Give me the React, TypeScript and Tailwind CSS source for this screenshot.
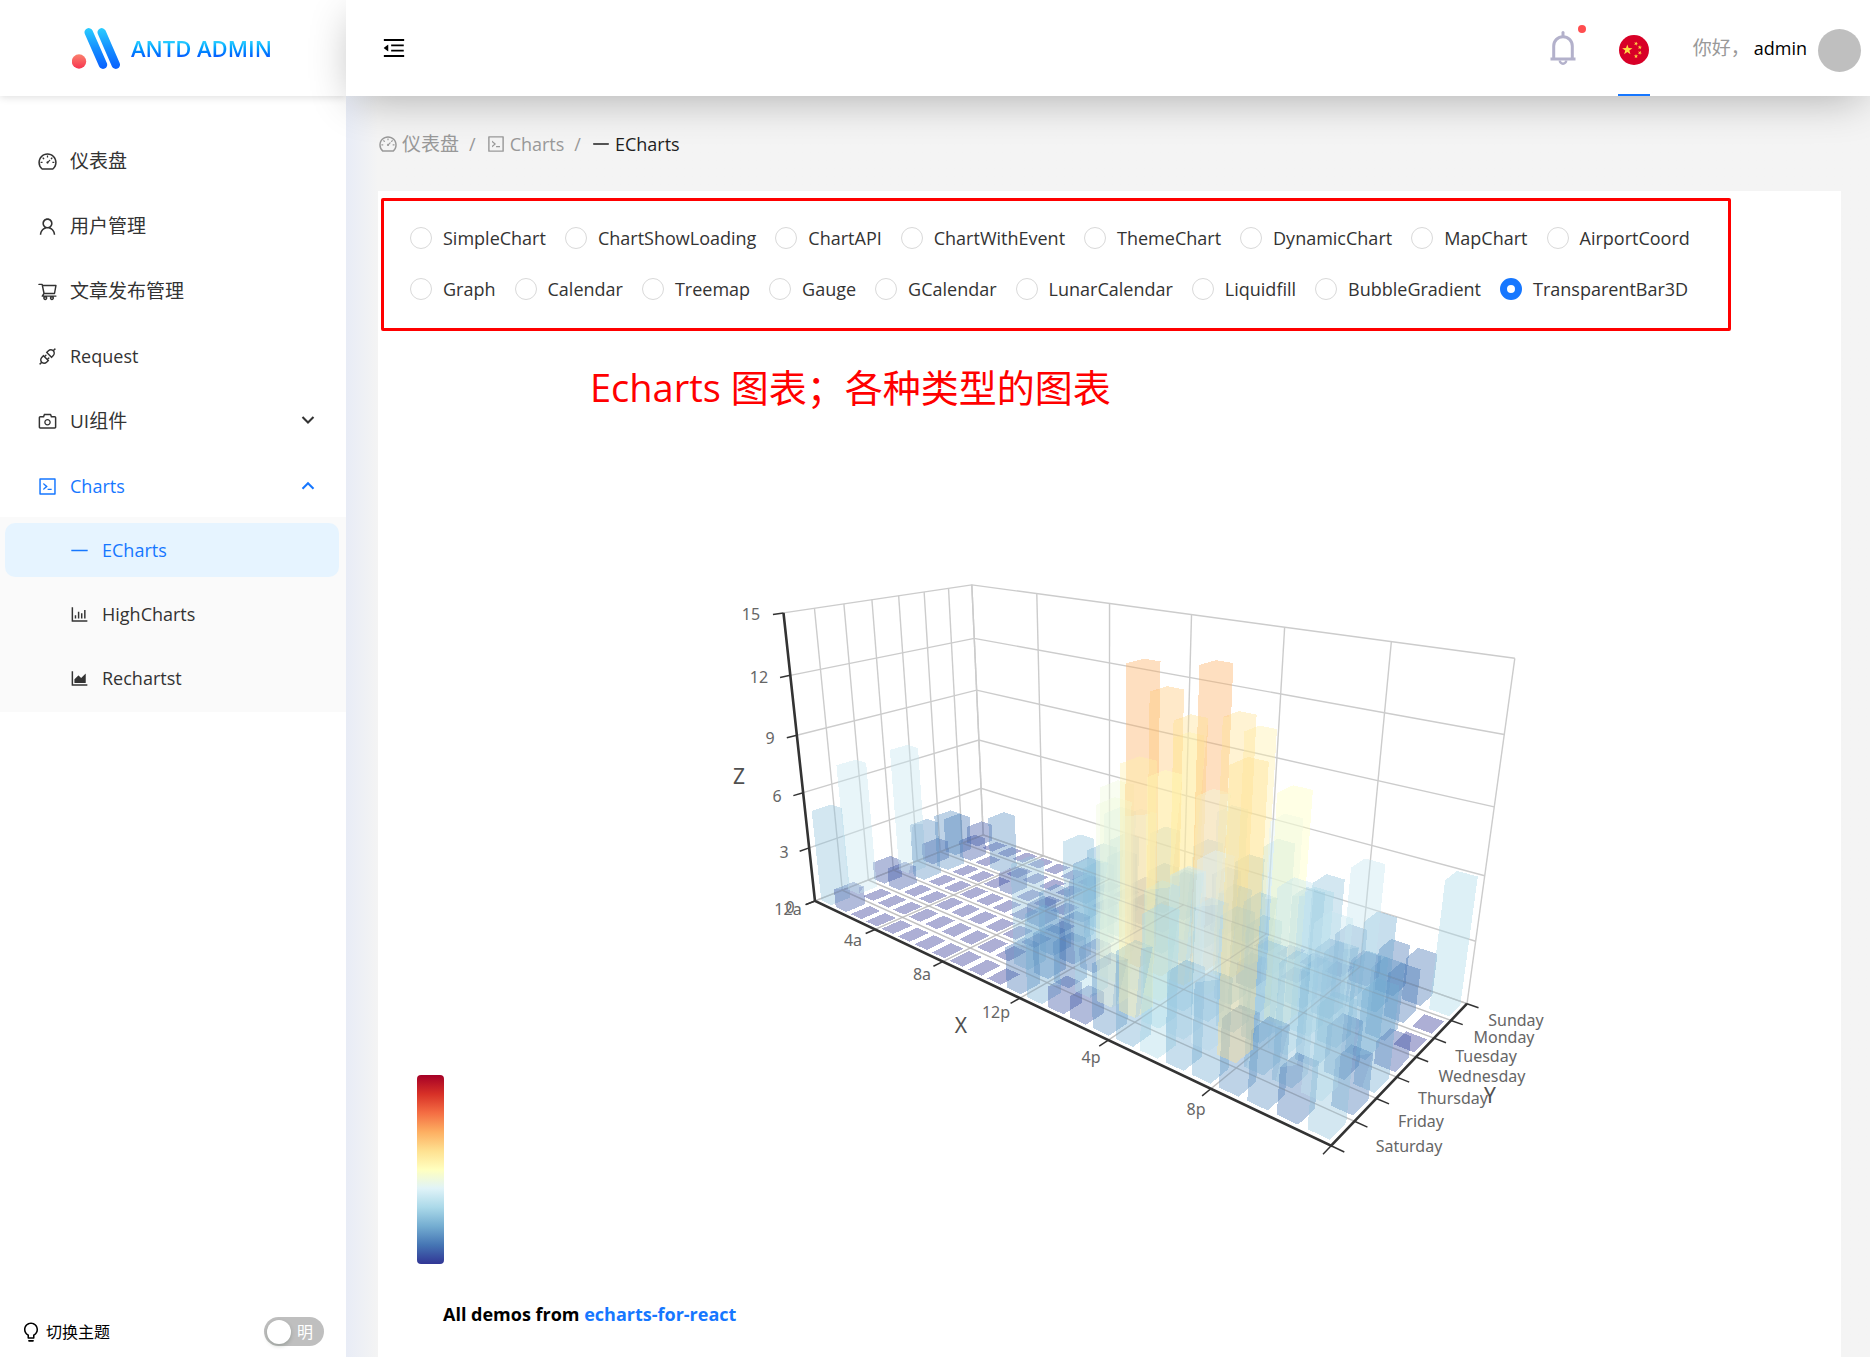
import React, { useState } from "react";
import {
  AiOutlineApi,
  AiOutlineAreaChart,
  AiOutlineBarChart,
  AiOutlineBulb,
  AiOutlineCamera,
  AiOutlineCode,
  AiOutlineDashboard,
  AiOutlineLine,
  AiOutlineMenuFold,
  AiOutlineShoppingCart,
  AiOutlineUser,
} from "react-icons/ai";

/* ---------- 3D bar chart ---------- */

const HOURS_BY_DAY = [
  [5, 1, 0, 0, 0, 0, 0, 0, 0, 0, 0, 2, 4, 1, 1, 3, 4, 6, 4, 4, 3, 3, 2, 5],
  [7, 0, 0, 0, 0, 0, 0, 0, 0, 0, 5, 2, 2, 6, 9, 11, 6, 7, 8, 12, 5, 5, 7, 2],
  [1, 1, 0, 0, 0, 0, 0, 0, 0, 0, 3, 2, 1, 9, 8, 10, 6, 5, 5, 5, 7, 4, 2, 4],
  [7, 3, 0, 0, 0, 0, 0, 0, 1, 0, 5, 4, 7, 14, 13, 12, 9, 5, 5, 10, 6, 4, 4, 1],
  [1, 3, 0, 0, 0, 1, 0, 0, 0, 2, 4, 4, 2, 4, 4, 14, 12, 1, 8, 5, 3, 7, 3, 0],
  [2, 1, 0, 3, 0, 0, 0, 0, 2, 0, 4, 1, 5, 10, 5, 7, 11, 6, 0, 5, 3, 4, 2, 0],
  [1, 0, 0, 0, 0, 0, 0, 0, 0, 0, 1, 0, 2, 1, 3, 4, 0, 0, 0, 0, 1, 2, 2, 6],
];

const RAMP = [
  [49, 54, 149],
  [69, 117, 180],
  [116, 173, 209],
  [171, 217, 233],
  [224, 243, 248],
  [255, 255, 191],
  [254, 224, 144],
  [253, 174, 97],
  [244, 109, 67],
  [215, 48, 39],
  [165, 0, 38],
];

function rampColor(value: number) {
  const t = value / 2;
  const i = Math.min(Math.floor(t), 9);
  const f = t - i;
  const c = RAMP[i].map((a, k) => Math.round(a + (RAMP[i + 1][k] - a) * f));
  return `rgb(${c[0]},${c[1]},${c[2]})`;
}

type V3 = [number, number, number];

const ALPHA = (20 * Math.PI) / 180;
const BETA = (40 * Math.PI) / 180;
const DISTANCE = 305;
const FOCAL = 1016.5;
const CENTER_X = 701;
const CENTER_Y = 470;

const EYE: V3 = [
  DISTANCE * Math.cos(ALPHA) * Math.sin(BETA),
  DISTANCE * Math.sin(ALPHA),
  DISTANCE * Math.cos(ALPHA) * Math.cos(BETA),
];

function eyeDistance(p: V3) {
  return Math.hypot(p[0] - EYE[0], p[1] - EYE[1], p[2] - EYE[2]);
}

function nearness([x, y, z]: V3) {
  return (
    x * Math.cos(ALPHA) * Math.sin(BETA) +
    y * Math.sin(ALPHA) +
    z * Math.cos(ALPHA) * Math.cos(BETA)
  );
}

function project(p: V3) {
  const [x, y, z] = p;
  const right = x * Math.cos(BETA) - z * Math.sin(BETA);
  const up =
    -x * Math.sin(ALPHA) * Math.sin(BETA) +
    y * Math.cos(ALPHA) -
    z * Math.sin(ALPHA) * Math.cos(BETA);
  const s = FOCAL / (DISTANCE - nearness(p));
  return [CENTER_X + right * s, CENTER_Y - up * s];
}

/* hour 0..24, day 0..7, value 0..15 to box coordinates */
function at(hour: number, day: number, value: number): V3 {
  return [-100 + (hour / 24) * 200, -50 + (value / 15) * 100, 40 - (day / 7) * 80];
}

function pts(list: V3[]) {
  return list.map((p) => project(p).map((n) => n.toFixed(2)).join(",")).join(" ");
}

/* Far triangles first; each is ranked by its corner nearest to the eye. */
function buildTriangles() {
  const out: { key: number; points: string; fill: string }[] = [];
  HOURS_BY_DAY.forEach((row, d) =>
    row.forEach((v, h) => {
      const [x0, x1, y0, y1] = [h + 0.15, h + 0.85, d + 0.15, d + 0.85];
      const quads: V3[][] = [[at(x0, y0, v), at(x1, y0, v), at(x1, y1, v), at(x0, y1, v)]];
      if (v > 0) {
        quads.push([at(x0, y0, 0), at(x1, y0, 0), at(x1, y0, v), at(x0, y0, v)]);
        quads.push([at(x1, y0, 0), at(x1, y1, 0), at(x1, y1, v), at(x1, y0, v)]);
      }
      quads.forEach((q) =>
        [
          [q[0], q[1], q[2]],
          [q[0], q[2], q[3]],
        ].forEach((t) =>
          out.push({
            key: Math.min(...t.map(eyeDistance)),
            points: pts(t),
            fill: rampColor(v),
          }),
        ),
      );
    }),
  );
  return out.sort((a, b) => b.key - a.key);
}

const TRIANGLES = buildTriangles();
const Z_TICKS = [0, 3, 6, 9, 12, 15];
const X_TICKS = [0, 4, 8, 12, 16, 20, 24];
const Y_TICKS = [0, 1, 2, 3, 4, 5, 6, 7];

const WALL_LINES: V3[][] = [
  ...Z_TICKS.map((v) => [at(0, 0, v), at(0, 7, v), at(24, 7, v)]),
  ...Y_TICKS.map((d) => [at(0, d, 0), at(0, d, 15)]),
  ...X_TICKS.map((h) => [at(h, 7, 0), at(h, 7, 15)]),
];
const FLOOR_LINES: V3[][] = [
  ...Y_TICKS.map((d) => [at(0, d, 0), at(24, d, 0)]),
  ...X_TICKS.map((h) => [at(h, 0, 0), at(h, 7, 0)]),
];
const TICK_LINES: V3[][] = [
  ...Z_TICKS.map((v) => [at(0, 0, v), at(0, -0.33, v)]),
  ...X_TICKS.map((h) => [at(h, 0, 0), at(h, -0.33, 0)]),
  ...Y_TICKS.map((d) => [at(24, d, 0), at(24.4, d, 0)]),
];

const AXIS_LABELS: [string, number, number][] = [
  ["15", 343, 285],
  ["12", 351, 348],
  ["9", 362, 409],
  ["6", 369, 467],
  ["3", 376, 523],
  ["0", 382, 578],
  ["12a", 380, 580],
  ["4a", 445, 611],
  ["8a", 514, 645],
  ["12p", 588, 683],
  ["4p", 683, 728],
  ["8p", 788, 780],
  ["Sunday", 1108, 691],
  ["Monday", 1096, 708],
  ["Tuesday", 1078, 727],
  ["Wednesday", 1074, 747],
  ["Thursday", 1045, 769],
  ["Friday", 1013, 792],
  ["Saturday", 1001, 817],
];
const AXIS_NAMES: [string, number, number][] = [
  ["Z", 331, 447],
  ["X", 553, 696],
  ["Y", 1082, 766],
];

function BarChart3D() {
  return (
    <svg
      viewBox="0 0 1403 940"
      className="h-[940px] w-full"
      role="img"
      aria-label="TransparentBar3D"
    >
      <g fill="none" stroke="#cccccc" strokeWidth="1.4">
        {WALL_LINES.concat(FLOOR_LINES).map((l, i) => (
          <polyline key={i} points={pts(l)} />
        ))}
      </g>
      <g fillOpacity="0.4" shapeRendering="crispEdges">
        {TRIANGLES.map((t, i) => (
          <polygon key={i} points={t.points} fill={t.fill} />
        ))}
      </g>
      <g fill="none" stroke="#9a9a9a" strokeOpacity="0.22" strokeWidth="1.2">
        {FLOOR_LINES.map((l, i) => (
          <polyline key={i} points={pts(l)} />
        ))}
      </g>
      <g fill="none" stroke="#333333">
        <polyline
          points={pts([at(0, 0, 15), at(0, 0, 0), at(24, 0, 0), at(24, 7, 0)])}
          strokeWidth="2.6"
        />
        {TICK_LINES.map((l, i) => (
          <polyline key={i} points={pts(l)} strokeWidth="1.5" />
        ))}
      </g>
      <g
        fill="#666666"
        textAnchor="middle"
        dominantBaseline="central"
        className="font-['Noto_Sans',sans-serif] text-[16px] font-normal"
      >
        {AXIS_LABELS.map(([t, x, y]) => (
          <text key={t} x={x} y={y}>
            {t}
          </text>
        ))}
      </g>
      <g
        fill="#505050"
        textAnchor="middle"
        dominantBaseline="central"
        className="font-['Noto_Sans',sans-serif] text-[21px] font-normal"
      >
        {AXIS_NAMES.map(([t, x, y]) => (
          <text key={t} x={x} y={y}>
            {t}
          </text>
        ))}
      </g>
    </svg>
  );
}

/* ---------- small drawings ---------- */

function Logo() {
  return (
    <svg width="48" height="41" viewBox="0 0 48 41" aria-hidden="true">
      <defs>
        <linearGradient id="logo-blue" gradientUnits="userSpaceOnUse" x1="0" y1="0" x2="0" y2="41">
          <stop offset="0" stopColor="#29cdff" />
          <stop offset="0.5" stopColor="#148eff" />
          <stop offset="1" stopColor="#0a60ff" />
        </linearGradient>
        <linearGradient id="logo-red" x1="0" y1="0" x2="0" y2="1">
          <stop offset="0" stopColor="#fa816e" />
          <stop offset="1" stopColor="#f7344f" />
        </linearGradient>
      </defs>
      <circle cx="7" cy="33.5" r="7.2" fill="url(#logo-red)" />
      <path
        d="M16.7 4.3 31 36.7M29.7 4.3 43.8 36.7"
        stroke="url(#logo-blue)"
        strokeWidth="8.4"
        strokeLinecap="round"
      />
    </svg>
  );
}

function Bell() {
  return (
    <svg width="26" height="34" viewBox="0 0 26 34" fill="none" stroke="#b3b1cb" aria-hidden="true">
      <path d="M13 1.5V5" strokeWidth="3" strokeLinecap="round" />
      <path d="M3.7 28V15a9.3 9.3 0 0 1 18.6 0v13" strokeWidth="3" />
      <path d="M.5 28h25" strokeWidth="3" />
      <path d="M9.8 29.5a3.2 3.2 0 0 0 6.4 0" strokeWidth="2.4" />
    </svg>
  );
}

function star(cx: number, cy: number, r: number, turn: number) {
  return Array.from({ length: 10 }, (_, i) => {
    const a = (i * Math.PI) / 5 - Math.PI / 2 + turn;
    const k = i % 2 ? r * 0.4 : r;
    return `${(cx + k * Math.cos(a)).toFixed(2)},${(cy + k * Math.sin(a)).toFixed(2)}`;
  }).join(" ");
}

function Flag() {
  return (
    <svg width="30" height="30" viewBox="0 0 30 30" aria-hidden="true">
      <circle cx="15" cy="15" r="15" fill="#d80027" />
      <g fill="#ffda44">
        <polygon points={star(8.3, 14.8, 5.4, 0)} />
        <polygon points={star(17, 8.7, 2.2, 0.4)} />
        <polygon points={star(20.8, 12.3, 2.2, 0.1)} />
        <polygon points={star(20.8, 17.8, 2.2, 0.5)} />
        <polygon points={star(17, 21.3, 2.2, 0)} />
      </g>
    </svg>
  );
}

function Chevron({ up }: { up?: boolean }) {
  return (
    <svg
      width="14"
      height="10"
      viewBox="0 0 14 10"
      fill="none"
      stroke="currentColor"
      strokeWidth="2.1"
      aria-hidden="true"
    >
      <path d={up ? "M1.5 7.8 7 2.3l5.5 5.5" : "M1.5 1 7 6.5 12.5 1"} />
    </svg>
  );
}

/* ---------- sidebar ---------- */

const MENU = [
  { label: "仪表盘", icon: AiOutlineDashboard },
  { label: "用户管理", icon: AiOutlineUser },
  { label: "文章发布管理", icon: AiOutlineShoppingCart },
  { label: "Request", icon: AiOutlineApi },
  { label: "UI组件", icon: AiOutlineCamera, arrow: "down" },
  { label: "Charts", icon: AiOutlineCode, arrow: "up" },
];

const SUBMENU = [
  { label: "ECharts", icon: AiOutlineLine, active: true },
  { label: "HighCharts", icon: AiOutlineBarChart },
  { label: "Rechartst", icon: AiOutlineAreaChart },
];

function Sidebar() {
  const [light, setLight] = useState(true);
  return (
    <aside className="flex w-[346px] shrink-0 flex-col bg-white">
      <div className="flex h-24 items-center gap-[11px] pl-[72px] shadow-[0_1px_8px_rgba(0,0,0,0.14)]">
        <Logo />
        <span className="bg-linear-to-t from-[#0a60ff] from-25% to-[#29cdff] to-70% bg-clip-text text-[22px] leading-8 font-semibold whitespace-nowrap text-transparent">
          ANTD ADMIN
        </span>
      </div>
      <nav className="flex flex-col pt-[38px]">
        <ul className="flex flex-col gap-[11px]">
          {MENU.map(({ label, icon: Icon, arrow }) => (
            <li key={label}>
              <button
                type="button"
                className={
                  arrow === "up"
                    ? "flex h-[54px] w-full items-center pr-[31px] pl-[37px] text-left text-[#1677ff]"
                    : "flex h-[54px] w-full items-center pr-[31px] pl-[37px] text-left"
                }
              >
                <Icon size={21} />
                <span
                  className={
                    /[^ -~]/.test(label) ? "ml-3 grow text-[19px]" : "ml-3 grow"
                  }
                >
                  {label}
                </span>
                {arrow && <Chevron up={arrow === "up"} />}
              </button>
            </li>
          ))}
        </ul>
        <ul className="mt-1 flex flex-col gap-2.5 bg-[#fafafa] pt-1.5 pr-[7px] pb-[7px] pl-[5px]">
          {SUBMENU.map(({ label, icon: Icon, active }) => (
            <li key={label}>
              <a
                href="#"
                className={
                  active
                    ? "flex h-[54px] items-center gap-3 rounded-[10px] bg-[#e6f4ff] pl-16 text-[#1677ff]"
                    : "flex h-[54px] items-center gap-3 rounded-[10px] pl-16"
                }
              >
                <Icon size={21} />
                {label}
              </a>
            </li>
          ))}
        </ul>
      </nav>
      <div className="mt-auto flex items-center pr-[22px] pb-[11px] pl-5 text-black">
        <AiOutlineBulb size={22} />
        <span className="ml-1 grow text-[16px]" id="theme-label">
          切换主题
        </span>
        <button
          type="button"
          role="switch"
          aria-checked={light}
          aria-labelledby="theme-label"
          onClick={() => setLight(!light)}
          className="flex h-[29px] w-[60px] items-center rounded-full bg-[#bfbfbf] px-[3px] text-[16px] text-white"
        >
          <span className="h-6 w-6 rounded-full bg-white shadow-[0_2px_4px_rgba(0,35,11,0.2)]" />
          <span className="ml-[6px]">明</span>
        </button>
      </div>
    </aside>
  );
}

/* ---------- main area ---------- */

function Header() {
  return (
    <header className="relative flex h-24 shrink-0 items-center bg-white pr-[9px] pl-[35px] shadow-[0_10px_44px_-8px_rgba(0,0,0,0.3)]">
      <button type="button" aria-label="Toggle menu">
        <AiOutlineMenuFold size={26} className="text-black" />
      </button>
      <div className="ml-auto flex h-full items-center">
        <button type="button" aria-label="Notifications" className="relative mr-[42px]">
          <Bell />
          <span className="absolute -top-1.5 -right-2.5 h-2 w-2 rounded-full bg-[#ff4d4f]" />
        </button>
        <button
          type="button"
          aria-label="Language"
          className="flex h-full w-8 items-center justify-center border-b-2 border-[#1677ff] pt-1.5"
        >
          <Flag />
        </button>
        <button type="button" className="ml-[43px] flex items-center">
          <span className="text-[19px] text-[#999]">你好，</span>
          <span className="ml-1 text-black">admin</span>
          <span className="mt-1 ml-[11px] h-[43px] w-[43px] rounded-full bg-[#bfbfbf]" />
        </button>
      </div>
    </header>
  );
}

const CHARTS = [
  "SimpleChart",
  "ChartShowLoading",
  "ChartAPI",
  "ChartWithEvent",
  "ThemeChart",
  "DynamicChart",
  "MapChart",
  "AirportCoord",
  "Graph",
  "Calendar",
  "Treemap",
  "Gauge",
  "GCalendar",
  "LunarCalendar",
  "Liquidfill",
  "BubbleGradient",
  "TransparentBar3D",
];

export default function App() {
  const [chart, setChart] = useState("TransparentBar3D");
  return (
    <div className="flex min-h-screen overflow-hidden bg-[#f4f4f4] font-['Open_Sans','Noto_Sans_CJK_SC',sans-serif] text-[18px] leading-7 font-normal text-[#333]">
      <Sidebar />
      <div className="flex min-w-0 grow flex-col">
        <Header />
        <main className="flex grow flex-col bg-linear-to-r from-[#e8ecf6] to-[#f4f4f4] to-[32px] pr-[29px] pl-8">
          <nav aria-label="Breadcrumb" className="pt-[34px] pb-[33px]">
            <ol className="flex items-center text-[#999]">
              <li className="flex items-center gap-1">
                <AiOutlineDashboard size={20} />
                <a href="#" className="text-[19px]">
                  仪表盘
                </a>
              </li>
              <li className="mx-2.5">/</li>
              <li className="flex items-center gap-1">
                <AiOutlineCode size={20} />
                <a href="#">Charts</a>
              </li>
              <li className="mx-2.5">/</li>
              <li className="flex items-center gap-1 text-[#1f1f1f]" aria-current="page">
                <AiOutlineLine size={20} />
                ECharts
              </li>
            </ol>
          </nav>
          <section className="relative h-0 min-h-[1166px] grow bg-white px-[30px] pt-[33px]">
            <div
              role="radiogroup"
              aria-label="Chart"
              className="flex flex-wrap gap-x-[19px] gap-y-[23px] pr-[60px] pl-0.5"
            >
              {CHARTS.map((name) => (
                <label key={name} className="flex items-center gap-[11px]">
                  <input
                    type="radio"
                    name="chart"
                    value={name}
                    checked={chart === name}
                    onChange={() => setChart(name)}
                    className="h-[22px] w-[22px] appearance-none rounded-full border border-[#d9d9d9] bg-white checked:border-[7px] checked:border-[#1677ff]"
                  />
                  {name}
                </label>
              ))}
            </div>
            <div className="relative mt-[26px]">
              <BarChart3D />
              <div
                className="absolute bottom-[5px] left-[9px] h-[189px] w-[27px] rounded-[4px] bg-[linear-gradient(to_top,#313695,#4575b4,#74add1,#abd9e9,#e0f3f8,#ffffbf,#fee090,#fdae61,#f46d43,#d73027,#a50026)]"
                aria-hidden="true"
              />
            </div>
            <p className="mt-[31px] pl-[35px] font-bold text-black">
              All demos from{" "}
              <a href="#" className="text-[#1677ff]">
                echarts-for-react
              </a>
            </p>
            <div className="pointer-events-none absolute top-[7px] left-[3px] h-[133px] w-[1350px] rounded-xs border-[3px] border-[#ff0000]" />
            <p className="absolute top-[168px] left-[212px] text-[38px] leading-[56px] font-normal whitespace-nowrap text-[#ff0000]">
              Echarts 图表；各种类型的图表
            </p>
          </section>
        </main>
      </div>
    </div>
  );
}
